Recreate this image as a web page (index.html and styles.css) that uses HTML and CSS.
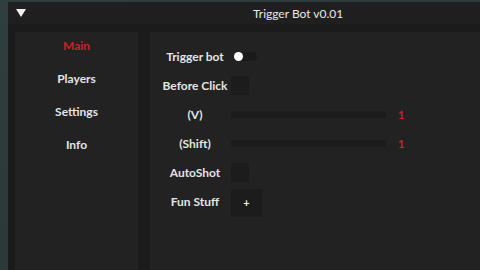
FILE: index.html
```html
<!DOCTYPE html>
<html lang="en">
<head>
    <meta charset="UTF-8">
    <meta name="viewport" content="width=device-width, initial-scale=1.0">
    <title>Trigger Bot v0.01</title>
    <link rel="stylesheet" href="styles.css">
</head>
<body>
    <div class="window">
        <!-- Title bar -->
        <div class="titlebar">
            <span class="collapse"></span>
            <span class="title">Trigger Bot v0.01</span>
        </div>

        <div class="panels">
            <!-- Tabs -->
            <div class="sidebar">
                <div class="tab active">Main</div>
                <div class="tab">Players</div>
                <div class="tab">Settings</div>
                <div class="tab">Info</div>
            </div>

            <!-- Main tab options -->
            <div class="content">
                <div class="row">
                    <span class="label">Trigger bot</span>
                    <span class="toggle"><span class="knob"></span></span>
                </div>
                <div class="row">
                    <span class="label">Before Click</span>
                    <span class="check"></span>
                </div>
                <div class="row">
                    <span class="label">(V)</span>
                    <span class="slider"></span>
                    <span class="value">1</span>
                </div>
                <div class="row">
                    <span class="label">(Shift)</span>
                    <span class="slider"></span>
                    <span class="value">1</span>
                </div>
                <div class="row">
                    <span class="label">AutoShot</span>
                    <span class="check"></span>
                </div>
                <div class="row">
                    <span class="label">Fun Stuff</span>
                    <span class="button">+</span>
                </div>
            </div>
        </div>
    </div>
</body>
</html>
```

FILE: styles.css
```css
body {
    margin: 0;
    padding: 2px 0 0 8px;
    height: 270px;
    box-sizing: border-box;
    overflow: hidden;
    background: linear-gradient(160deg, #2f3e3e, #2a3535);
    font-family: Lato, "Open Sans", sans-serif;
    font-weight: bold;
    font-size: 12px;
    color: #e4e4e4;
}

.window {
    height: 268px;
    background: #1b1b1b;
    overflow: hidden;
}

.titlebar {
    height: 22px;
    background: #1f1f1f;
    display: flex;
    align-items: center;
}

.collapse {
    width: 0;
    height: 0;
    margin-left: 8px;
    border-left: 5px solid transparent;
    border-right: 5px solid transparent;
    border-top: 8px solid #f2f2f2;
}

.title {
    margin-left: 227px;
    font-weight: normal;
    font-size: 12px;
    color: #e8e8e8;
}

.panels {
    display: flex;
    gap: 12px;
    padding: 8px 0 0 7px;
    height: 246px;
    box-sizing: border-box;
}

.sidebar {
    width: 123px;
    background: #222222;
    padding-top: 5px;
    display: flex;
    flex-direction: column;
    gap: 15px;
}

.tab {
    height: 18px;
    line-height: 18px;
    text-align: center;
}

.tab.active {
    color: #c8222e;
}

.content {
    flex: 1;
    background: #222222;
    padding-top: 10px;
}

.row {
    height: 29px;
    display: flex;
    align-items: center;
}

.label {
    width: 70px;
    margin-left: 10px;
    margin-right: 1px;
    text-align: center;
}

.toggle {
    width: 23px;
    height: 9px;
    margin-left: 3px;
    border-radius: 5px;
    background: #1a1a1a;
    display: flex;
    align-items: center;
}

.knob {
    width: 9px;
    height: 9px;
    border-radius: 50%;
    background: #ffffff;
}

.check {
    width: 18px;
    height: 19px;
    background: #1c1c1c;
}

.slider {
    width: 155px;
    height: 7px;
    background: #1c1c1c;
}

.value {
    margin-left: 12px;
    color: #c8222e;
    font-size: 11px;
}

.button {
    width: 31px;
    height: 28px;
    margin-top: 2px;
    background: #1c1c1c;
    display: flex;
    align-items: center;
    justify-content: center;
    font-size: 11px;
    color: #f0f0f0;
}
```
